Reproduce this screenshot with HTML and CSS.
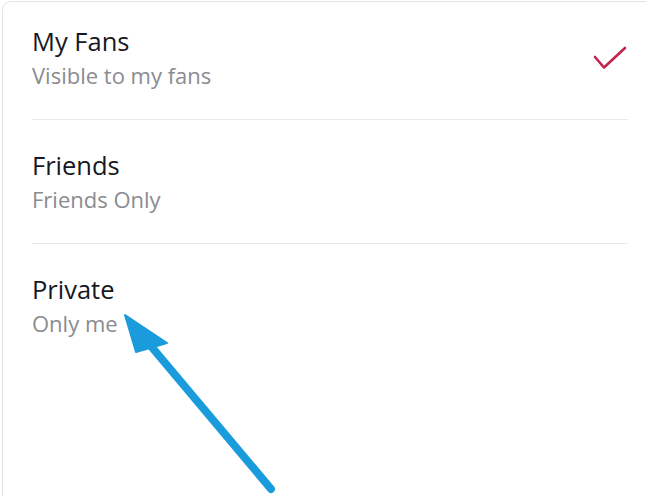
FILE: index.html
```
<!DOCTYPE html>
<html>
<head>
<meta charset="utf-8">
<link rel="stylesheet" href="styles.css">
</head>
<body>
<div class="card">
  <div class="row">
    <div class="texts">
      <div class="title">My Fans</div>
      <div class="sub">Visible to my fans</div>
    </div>
    <svg class="check" width="36" height="28" viewBox="0 0 36 28">
      <path d="M2 11 L11 21.5 L32 2" fill="none" stroke="#c4224d" stroke-width="2.6" stroke-linecap="round" stroke-linejoin="round"/>
    </svg>
  </div>
  <div class="row">
    <div class="texts">
      <div class="title">Friends</div>
      <div class="sub">Friends Only</div>
    </div>
  </div>
  <div class="row last">
    <div class="texts">
      <div class="title">Private</div>
      <div class="sub">Only me</div>
    </div>
  </div>
</div>
<svg class="arrow" width="646" height="496" viewBox="0 0 646 496">
  <line x1="150" y1="345" x2="271" y2="489" stroke="#1a9cdc" stroke-width="8" stroke-linecap="round"/>
  <polygon points="125,315 136,352 167,343" fill="#1a9cdc" stroke="#1a9cdc" stroke-width="2" stroke-linejoin="round"/>
</svg>
</body>
</html>
```
FILE: styles.css
```
html, body {
  margin: 0;
  padding: 0;
  background: #ffffff;
}
body {
  width: 646px;
  height: 496px;
  overflow: hidden;
  position: relative;
  font-family: "Open Sans", Lato, sans-serif;
}
.card {
  margin: 1px 0 0 2px;
  border-top: 1px solid #e4e4e4;
  border-left: 1px solid #e4e4e4;
  border-top-left-radius: 9px;
  height: 495px;
  box-sizing: border-box;
  overflow: hidden;
  padding: 0 18px 0 29px;
}
.row {
  display: flex;
  align-items: center;
  justify-content: space-between;
  padding: 29px 0 30px 0;
  border-bottom: 1px solid #e9e9e9;
}
.row:first-child {
  padding-top: 23px;
}
.row.last {
  border-bottom: none;
}
.texts {
  display: flex;
  flex-direction: column;
}
.title {
  font-size: 25.5px;
  line-height: 32px;
  color: #161823;
}
.sub {
  font-size: 22px;
  line-height: 28px;
  margin-top: 4px;
  color: #8a8b91;
}
.check {
  margin-right: -1px;
  margin-top: 6px;
}
.arrow {
  position: absolute;
  left: 0;
  top: 0;
}
```
